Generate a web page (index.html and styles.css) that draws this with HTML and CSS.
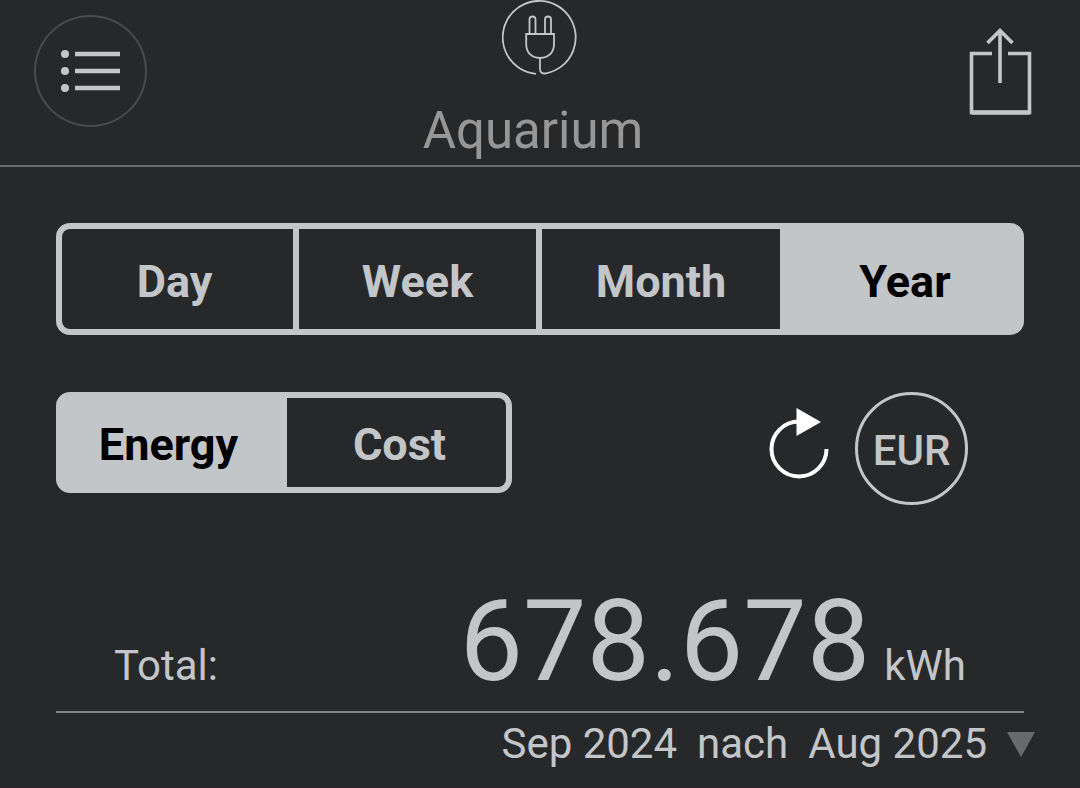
FILE: index.html
```html
<!DOCTYPE html>
<html lang="en">
<head>
<meta charset="utf-8">
<meta name="viewport" content="width=device-width, initial-scale=1">
<title>Aquarium</title>
<link rel="stylesheet" href="styles.css">
</head>
<body>
<header class="topbar">
  <button class="menu-button" type="button" aria-label="Menu">
    <svg width="60" height="46" viewBox="0 0 60 46" aria-hidden="true">
      <g fill="currentColor">
        <circle cx="4" cy="6" r="4"/><circle cx="4" cy="23" r="4"/><circle cx="4" cy="40" r="4"/>
      </g>
      <path d="M14 6h45M14 23h45M14 40h45" stroke="currentColor" stroke-width="4.4"/>
    </svg>
  </button>
  <div class="device">
    <svg class="plug" width="76" height="76" viewBox="0 0 76 76" fill="none" stroke="currentColor" stroke-width="1.8" aria-hidden="true">
      <path d="M34 73.8A36.5 36.5 0 1 1 44 73.3C40.500 74 38 72.500 38 69V58"/>
      <path d="M24.200 34H52V44C52 52.500 46.500 58 38 58S24.200 52.500 24.200 44Z"/>
      <path d="M27.500 34V19.500a3 3 0 0 1 6 0V34M43 34V19.500a3 3 0 0 1 6 0V34"/>
    </svg>
    <h1 class="title">Aquarium</h1>
  </div>
  <button class="share-button" type="button" aria-label="Share">
    <svg width="64" height="90" viewBox="0 0 64 90" fill="none" stroke="currentColor" aria-hidden="true">
      <path d="M24 25.500H3.500V84.500H61.500V25.500H40" stroke-width="3.600"/>
      <path d="M3.500 84.500H61.500" stroke-width="4.400"/>
      <path d="M32 55V2M19.500 15 32 2.500 44.500 15" stroke-width="3.600"/>
    </svg>
  </button>
</header>
<main class="content">
  <div class="segments periods" role="group" aria-label="Period">
    <button class="segment" type="button" aria-pressed="false">Day</button>
    <button class="segment" type="button" aria-pressed="false">Week</button>
    <button class="segment" type="button" aria-pressed="false">Month</button>
    <button class="segment" type="button" aria-pressed="true">Year</button>
  </div>
  <div class="toolbar">
    <div class="segments measures" role="group" aria-label="Measure">
      <button class="segment" type="button" aria-pressed="true">Energy</button>
      <button class="segment" type="button" aria-pressed="false">Cost</button>
    </div>
    <div class="actions">
      <button class="reload-button" type="button" aria-label="Reload">
        <svg width="60" height="74" viewBox="0 0 60 74" aria-hidden="true">
          <path d="M57.500 43A27.500 27.500 0 1 1 30 15.500" fill="none" stroke="currentColor" stroke-width="4"/>
          <path d="M27.500 2 52 16 27.500 30Z" fill="currentColor"/>
        </svg>
      </button>
      <button class="currency-button" type="button">EUR</button>
    </div>
  </div>
  <div class="total">
    <span class="total-label">Total:</span>
    <span class="total-amount"><span class="total-value">678.678</span><span class="total-unit">kWh</span></span>
  </div>
  <button class="range" type="button">
    <span>Sep 2024</span><span>nach</span><span>Aug 2025</span>
    <svg width="28" height="26" viewBox="0 0 28 26" aria-hidden="true"><path d="M0 1H28L14 26Z" fill="currentColor"/></svg>
  </button>
</main>
</body>
</html>
```
FILE: styles.css
```css
* {
  box-sizing: border-box;
}

body {
  margin: 0;
  min-height: 100vh;
  border-bottom: 1px solid #30262b;
  background: #27282a;
  color: #c3c6c9;
  font-family: Roboto, sans-serif;
  font-size: 42px;
  line-height: 48px;
}

button {
  margin: 0;
  padding: 0;
  border: 0;
  background: none;
  color: inherit;
  font: inherit;
  cursor: pointer;
}

svg {
  display: block;
}

.topbar {
  display: grid;
  grid-template-columns: 1fr auto 1fr;
  align-items: start;
  padding: 0 34px 5px;
  border-bottom: 2px solid #6b6c6e;
}

.menu-button {
  display: grid;
  place-items: center;
  width: 113px;
  height: 112px;
  margin-top: 15px;
  border: 2px solid #4a4b4d;
  border-radius: 50%;
}

.device {
  display: flex;
  flex-direction: column;
  align-items: center;
}

.title {
  margin: 25px 14px 0 0;
  color: #979797;
  font-size: 51px;
  font-weight: 400;
  line-height: 59px;
}

.share-button {
  justify-self: end;
  margin: 28px 14px 0 0;
}

.content {
  padding: 56px 56px 12px;
}

.segments {
  display: grid;
  gap: 6px;
  border: 6px solid #c3c6c9;
  border-radius: 14px;
  background: #c3c6c9;
}

.periods {
  grid-template-columns: 231fr 237fr 238fr 232fr;
  height: 112px;
}

.measures {
  grid-template-columns: 1fr 1fr;
  width: 456px;
  height: 101px;
}

.segment {
  padding-top: 5px;
  background: #27282a;
  font-size: 45px;
  font-weight: 700;
}

.segment:first-child {
  padding-right: 6px;
  border-radius: 8px 0 0 8px;
}

.segment:last-child {
  padding-left: 6px;
  border-radius: 0 8px 8px 0;
}

.segment[aria-pressed="true"] {
  background: #c3c6c9;
  color: #000;
}

.toolbar {
  display: flex;
  justify-content: space-between;
  margin-top: 57px;
}

.actions {
  display: flex;
  align-items: center;
  gap: 26px;
  padding-right: 56px;
}

.reload-button {
  padding-bottom: 12px;
  color: #fff;
}

.currency-button {
  width: 113px;
  height: 113px;
  padding-top: 4px;
  border: 3px solid #c3c6c9;
  border-radius: 50%;
  font-weight: 500;
}

.total {
  display: flex;
  align-items: baseline;
  justify-content: space-between;
  margin-top: 73px;
  padding: 0 58px 5px;
  border-bottom: 2px solid #848587;
}

.total-amount {
  display: flex;
  align-items: baseline;
  gap: 14px;
}

.total-value {
  font-size: 113px;
  line-height: 128px;
}

.range {
  display: flex;
  align-items: center;
  gap: 20px;
  margin: 7px -11px 0 auto;
}

.range svg {
  color: #686b6c;
}
```
